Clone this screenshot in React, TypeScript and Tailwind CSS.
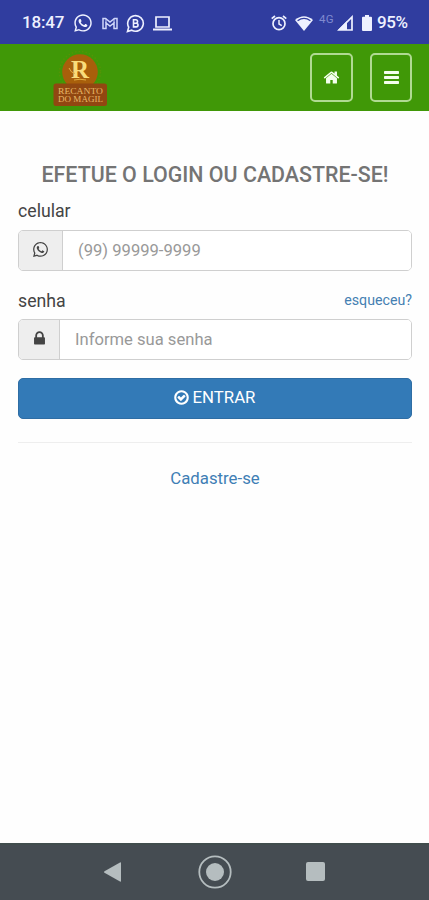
import { FaWhatsapp } from "react-icons/fa";

const HomeIcon = () => (
    <svg viewBox="0 0 1792 1792" className="w-[17px] h-[17px]" fill="currentColor">
        <path d="M1472 992v480q0 26-19 45t-45 19h-384v-384h-256v384h-384q-26 0-45-19t-19-45v-480q0-1 .5-3t.5-3l575-474 575 474q1 2 1 6zm223-69l-62 74q-8 9-21 11h-3q-13 0-21-7l-692-577-692 577q-12 8-24 7-13-2-21-11l-62-74q-8-10-7-23.5t11-21.5l719-599q32-26 76-26t76 26l244 204v-195q0-14 9-23t23-9h192q14 0 23 9t9 23v408l219 182q10 8 11 21.5t-7 23.5z" />
    </svg>
);

const LockIcon = () => (
    <svg viewBox="0 0 1792 1792" className="-mt-[2px] w-[17px] h-[17px]" fill="currentColor">
        <path d="M640 768h512v-192q0-106-75-181t-181-75-181 75-75 181v192zm832 96v576q0 40-28 68t-68 28h-960q-40 0-68-28t-28-68v-576q0-40 28-68t68-28h32v-192q0-184 132-316t316-132 316 132 132 316v192h32q40 0 68 28t28 68z" />
    </svg>
);

const CheckIcon = () => (
    <svg viewBox="0 0 1792 1792" className="w-[17px] h-[17px]" fill="currentColor">
        <path d="M1299 813l-422 422q-19 19-45 19t-45-19l-294-294q-19-19-19-45t19-45l102-102q19-19 45-19t45 19l147 147 275-275q19-19 45-19t45 19l102 102q19 19 19 45t-19 45zm141 83q0-148-73-273t-198-198-273-73-273 73-198 198-73 273 73 273 198 198 273 73 273-73 198-198 73-273zm224 0q0 209-103 385.5t-279.5 279.5-385.5 103-385.5-103-279.5-279.5-103-385.5 103-385.5 279.5-279.5 385.5-103 385.5 103 279.5 279.5 103 385.5z" />
    </svg>
);

const StatusBar = () => (
    <div className="flex items-center h-[44px] pt-[2px] pl-[22px] pr-[21px] bg-[#303d9f] text-[#eef1ff] font-medium">
        <span className="w-[42px] text-[17px] tracking-[-0.2px]">18:47</span>
        <FaWhatsapp className="ml-[9px] w-[20px] h-[20px]" />
        <svg viewBox="0 0 16 13" className="ml-[9px] w-[16px] h-[13px]" fill="none" stroke="#cfd6fa">
            <path d="M1 1.5h2.5L8 5l4.500-3.500H15v10h-3V6L8 9 4 6v5.500H1z" strokeWidth="1.500" />
            <path d="M4 1.500V6M12 1.500V6" />
        </svg>
        <svg viewBox="0 0 19 19" className="ml-[8px] w-[19px] h-[19px]" fill="none" stroke="currentColor">
            <path d="M1.500 17.500l1.200-4.300a7.800 7.800 0 1 1 3 3z" strokeWidth="1.600" />
            <path d="M7.500 5.700h2.300a1.700 1.700 0 0 1 0 3.500H7.500zM7.500 9.200h2.700a1.800 1.800 0 0 1 0 3.700H7.500z" strokeWidth="1.600" />
        </svg>
        <svg viewBox="0 0 19 15" className="ml-[8px] w-[19px] h-[15px]" fill="none" stroke="currentColor">
            <path d="M3 1h13v10H3z" strokeWidth="1.700" />
            <path d="M0 13.500h19" strokeWidth="2" />
        </svg>
        <svg viewBox="0 0 16 16" className="ml-auto w-[16px] h-[16px]" fill="none" stroke="currentColor">
            <circle cx="8" cy="8.700" r="6" strokeWidth="1.700" />
            <path d="M8 5v4l2.800 1.700" strokeWidth="1.500" />
            <path d="M.7 3.700L4 1M15.300 3.700L12 1" strokeWidth="1.700" />
        </svg>
        <svg viewBox="0 0 18 15" className="ml-[8px] w-[18px] h-[15px]">
            <path d="M0 4Q9-3.500 18 4L9 15z" fill="currentColor" />
            <path d="M2.600 4.700Q9 .2 15.400 4.700" fill="none" stroke="#303d9f" strokeWidth="1.300" />
        </svg>
        <span className="ml-[6px] -mt-[6px] w-[16px] text-[11.5px] tracking-[0.3px] font-normal text-[#7f8ad0]">4G</span>
        <svg viewBox="0 0 16 16" className="ml-[2px] w-[16px] h-[16px]">
            <path d="M15 2v13H2z" fill="none" stroke="currentColor" strokeWidth="1.700" />
            <path d="M10 6v9H1z" fill="currentColor" />
        </svg>
        <svg viewBox="0 0 10 16" className="ml-[9px] w-[10px] h-[16px]" fill="currentColor">
            <path d="M3 0h4v1.700h2q1 0 1 1V15q0 1-1 1H1q-1 0-1-1V2.700q0-1 1-1h2z" />
        </svg>
        <span className="ml-[5px] w-[31px] text-[17px] tracking-[-0.4px] whitespace-nowrap">95%</span>
    </div>
);

const Logo = () => (
    <svg viewBox="0 0 56 60" className="w-[56px] h-[60px]">
        <circle cx="28" cy="24" r="20.500" fill="none" stroke="#7c8d08" strokeWidth="1.500" strokeDasharray="1.500 2" opacity="0.35" />
        <circle cx="28" cy="24" r="17.800" fill="#a85f0b" />
        <rect x="1.500" y="35.500" width="53.500" height="22.500" rx="2.500" fill="#914711" />
        <text x="28" y="30" textAnchor="middle" fontFamily="Liberation Serif, serif" fontWeight="700" fontSize="25" fill="#f9dc7b">R</text>
        <path d="M17 20q2 5 6 5.500M22 32q6-1.500 12 0" fill="none" stroke="#e2ae45" />
        <text x="28.500" y="46" textAnchor="middle" textLength="45" lengthAdjust="spacingAndGlyphs" fontFamily="Liberation Serif, serif" fontSize="8" fill="#e8b868">RECANTO</text>
        <text x="28.500" y="53.500" textAnchor="middle" textLength="45" lengthAdjust="spacingAndGlyphs" fontFamily="Liberation Serif, serif" fontSize="8" fill="#e8b868">DO MAGIL</text>
    </svg>
);

const Header = () => (
    <header className="flex items-center h-[67px] pl-[52px] pr-[17px] bg-[#409807] text-[#f4ffed]">
        <Logo />
        <button className="flex items-center justify-center ml-auto w-[43px] h-[49px] rounded-[5px] border-2 border-[#b0da92]">
            <HomeIcon />
        </button>
        <button className="flex items-center justify-center ml-[17px] w-[42px] h-[49px] rounded-[5px] border-2 border-[#b0da92]">
            <svg viewBox="0 0 15 13" className="w-[15px] h-[13px]" fill="currentColor">
                <rect width="15" height="3" rx="0.700" />
                <rect y="5" width="15" height="3" rx="0.700" />
                <rect y="10" width="15" height="3" rx="0.700" />
            </svg>
        </button>
    </header>
);

export default function App() {
    return (
        <div className="flex flex-col h-[900px] w-full bg-[#fefefe] font-[Roboto,sans-serif] text-[#444]">
            <StatusBar />
            <Header />
            <form className="flex flex-col flex-1 pl-[18px] pr-[17px] pt-[51px]" onSubmit={(e) => e.preventDefault()}>
                <h1 className="text-center text-[21.4px] leading-[26px] font-medium text-[#747474] whitespace-nowrap">
                    EFETUE O LOGIN OU CADASTRE-SE!
                </h1>
                <label htmlFor="phone" className="mt-[11px] h-[24px] text-[17.7px] leading-[24px]">
                    celular
                </label>
                <div className="flex mt-[7px] h-[41px] rounded-[5px] border border-[#cfcfcf] overflow-hidden">
                    <span className="flex items-center justify-center w-[44px] bg-[#eeeeee] border-r border-[#cfcfcf]">
                        <FaWhatsapp className="-mt-[2px] w-[17px] h-[17px]" />
                    </span>
                    <input
                        id="phone"
                        className="flex-1 pt-[2px] pl-[15px] bg-white text-[16.6px] placeholder:text-[#999] outline-none"
                        placeholder="(99) 99999-9999"
                    />
                </div>
                <div className="flex items-center justify-between mt-[18px] h-[24px]">
                    <label htmlFor="password" className="text-[17.7px]">senha</label>
                    <a href="#" className="text-[14.2px] text-[#4580b2]">esqueceu?</a>
                </div>
                <div className="flex mt-[6px] h-[41px] rounded-[5px] border border-[#cfcfcf] overflow-hidden">
                    <span className="flex items-center justify-center w-[41px] bg-[#eeeeee] border-r border-[#cfcfcf]">
                        <LockIcon />
                    </span>
                    <input
                        id="password"
                        type="password"
                        className="flex-1 pt-[2px] pl-[15px] bg-white text-[16.6px] placeholder:text-[#999] outline-none"
                        placeholder="Informe sua senha"
                    />
                </div>
                <button
                    type="submit"
                    className="flex items-center justify-center gap-[3px] mt-[18px] h-[41px] pr-[2px] pb-[2px] rounded-[5px] border border-[#2e6da4] bg-[#337ab7] text-[16.8px] text-white"
                >
                    <CheckIcon />
                    ENTRAR
                </button>
                <hr className="mt-[23px] border-[#eeeeee]" />
                <a href="#" className="mt-[23px] text-center text-[16.8px] leading-[24px] text-[#3f7eb5]">
                    Cadastre-se
                </a>
            </form>
            <nav className="flex items-center h-[57px] pb-[2px] border-t-2 border-[#414d4d] bg-[#454c52] text-[#b5bdbf]">
                <svg viewBox="0 0 17 20" className="ml-[104px] w-[17px] h-[20px]" fill="currentColor">
                    <path d="M16 .5q1-.5 1 .5v18q0 1-1 .5L.5 10.800q-1-.8 0-1.600z" />
                </svg>
                <svg viewBox="0 0 34 34" className="ml-[77px] w-[34px] h-[34px]">
                    <circle cx="17" cy="17" r="15.700" fill="none" stroke="currentColor" strokeWidth="1.800" />
                    <circle cx="17" cy="17" r="9" fill="currentColor" />
                </svg>
                <div className="ml-[74px] w-[19px] h-[19px] rounded-[2px] bg-[#b5bdbf]" />
            </nav>
        </div>
    );
}
